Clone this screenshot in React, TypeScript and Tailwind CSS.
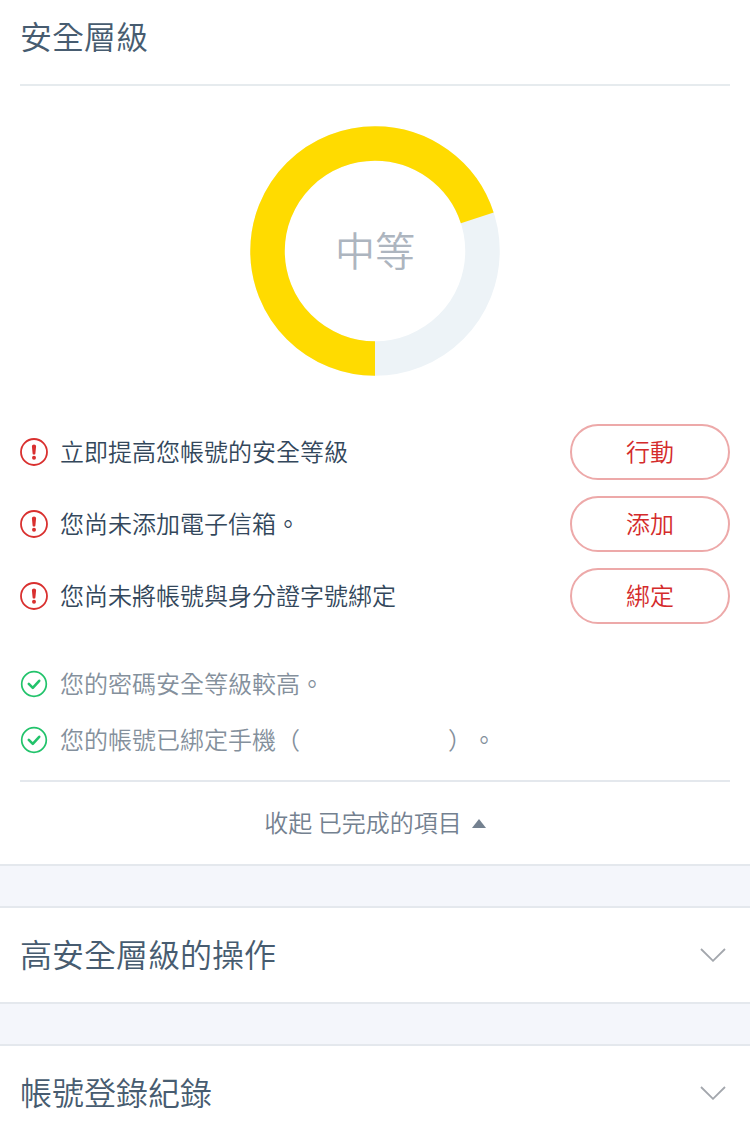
import { useState } from 'react';

const alerts = [
  { id: 'level', text: '立即提高您帳號的安全等級', action: '行動' },
  { id: 'email', text: '您尚未添加電子信箱。', action: '添加' },
  { id: 'identity', text: '您尚未將帳號與身分證字號綁定', action: '綁定' },
];

function AlertIcon() {
  return (
    <svg className="w-7 h-7 flex-shrink-0" viewBox="0 0 28 28" fill="none" aria-hidden="true">
      <circle cx="14" cy="14" r="13" stroke="#d9302f" strokeWidth="1.8" />
      <path d="M11.9 8.2a2.1 1.7 0 0 1 4.2 0l-.7 7.2a1.4 1.2 0 0 1-2.8 0z" fill="#d9302f" />
      <circle cx="14" cy="19.7" r="2" fill="#d9302f" />
    </svg>
  );
}

function DoneIcon() {
  return (
    <svg className="w-7 h-7 flex-shrink-0" viewBox="0 0 28 28" fill="none" aria-hidden="true">
      <circle cx="14" cy="14" r="12.3" stroke="#22c36b" strokeWidth="1.7" />
      <path d="M8.8 13.8l4 4 6.4-7" stroke="#22c36b" strokeWidth="2.6" strokeLinecap="round" strokeLinejoin="round" />
    </svg>
  );
}

function LevelChart({ percent, label }: { percent: number; label: string }) {
  return (
    <div className="relative w-[250px] mx-auto">
      <svg viewBox="0 0 250 250" className="block w-full" fill="none" aria-hidden="true">
        <circle cx="125" cy="125" r="107.5" stroke="#edf3f7" strokeWidth="34.5" />
        {/* the arc starts at the bottom and runs clockwise */}
        <circle cx="125" cy="125" r="107.5" stroke="#ffdb00" strokeWidth="34.5" pathLength="100"
          strokeDasharray={`${percent} 100`} transform="rotate(90 125 125)" />
      </svg>
      <p className="absolute inset-0 pb-1 flex items-center justify-center text-[40px] text-[#adb5bf]">{label}</p>
    </div>
  );
}

function CollapsedSection({ title }: { title: string }) {
  return (
    <section className="mt-10 bg-white border-y-2 border-[#e4e8ed] last:border-b-0">
      <h2 className="text-[32px] leading-[46px] font-[350] text-[#475c70]">
        <button type="button" className="w-full flex items-center justify-between pl-5 pr-6 py-[22px]" aria-expanded="false">
          <span className="pb-1">{title}</span>
          <svg className="w-[26px] h-[14px]" viewBox="0 0 26 14" fill="none" aria-hidden="true">
            <path d="M1 1l12 11.8L25 1" stroke="#a3a7ad" strokeWidth="1.8" />
          </svg>
        </button>
      </h2>
    </section>
  );
}

export default function App() {
  const [showDone, setShowDone] = useState(true);

  return (
    <main lang="zh-Hant" className="min-h-screen bg-[#f4f6fb] font-['Noto_Sans_CJK_TC',sans-serif] font-[350]">
      <section className="bg-white px-5 border-b-2 border-[#e4e8ed]">
        <h1 className="pt-3 pb-[26px] text-[32px] leading-[46px] font-[350] text-[#475c70] border-b-2 border-[#e6ebee]">安全層級</h1>

        <div className="pt-10">
          <LevelChart percent={70} label="中等" />
        </div>

        <ul className="mt-12 space-y-4">
          {alerts.map(alert => (
            <li key={alert.id} className="flex items-center gap-3 text-2xl text-[#33475b]">
              <AlertIcon />
              <span className="flex-1 pb-0.5">{alert.text}</span>
              <button type="button" className="w-40 h-14 pb-0.5 rounded-full border-2 border-[#eda9a9] text-[#d42b2b]">
                {alert.action}
              </button>
            </li>
          ))}
        </ul>

        {showDone && (
          <ul className="mt-8 text-2xl text-[#84909c]">
            <li className="flex items-center gap-3 h-14">
              <DoneIcon />
              <span className="pb-0.5">您的密碼安全等級較高。</span>
            </li>
            <li className="flex items-center gap-3 h-14">
              <DoneIcon />
              <span className="flex pb-0.5 [text-spacing-trim:space-all]">
                您的帳號已綁定手機（
                <span className="w-[148px]" />
                ）。
              </span>
            </li>
          </ul>
        )}

        <div className="mt-3 border-t-2 border-[#e4e8ed]">
          <button type="button" onClick={() => setShowDone(!showDone)} aria-expanded={showDone}
            className="w-full h-[82px] flex items-center justify-center gap-[10px] text-2xl text-[#748190]">
            <span className="pb-0.5">{showDone ? '收起' : '展開'} 已完成的項目</span>
            <svg className={showDone ? 'w-[14px] h-[9px]' : 'w-[14px] h-[9px] rotate-180'} viewBox="0 0 14 9" aria-hidden="true">
              <path d="M7 0l7 9H0z" fill="#748190" />
            </svg>
          </button>
        </div>
      </section>

      <CollapsedSection title="高安全層級的操作" />
      <CollapsedSection title="帳號登錄紀錄" />
    </main>
  );
}
